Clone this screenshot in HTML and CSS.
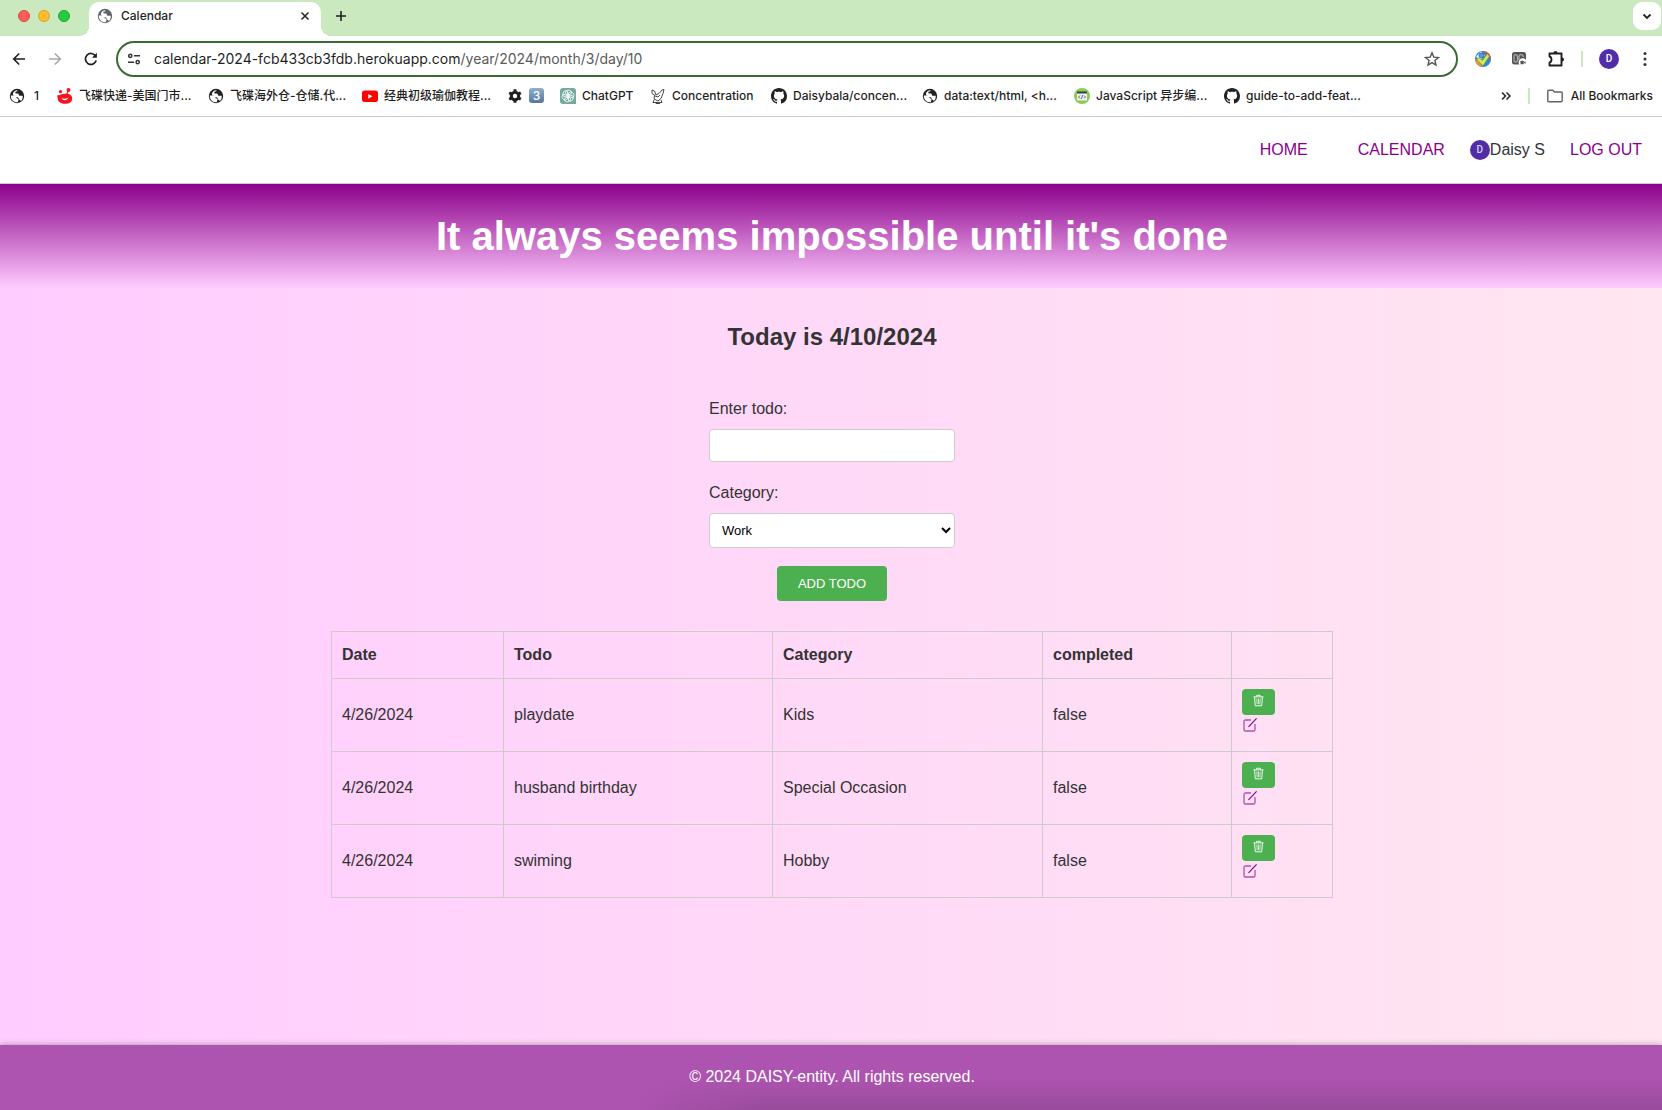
FILE: index.html
```
<!DOCTYPE html>
<html lang="en">
<head>
<meta charset="utf-8">
<title>Calendar</title>
<link rel="stylesheet" href="styles.css">
</head>
<body>
<svg class="defs" width="0" height="0" aria-hidden="true">
  <symbol id="globe" viewBox="0 0 16 16"><circle cx="8" cy="8" r="7.200" fill="currentColor"/><path d="M1.800 7.600h3.400c1.400 0 2.300.9 2.300 2.100 0 .5.500.7 1 .7.800 0 1 .6 1 1.300 0 .8-.6 1.300-.6 2.500-3.900.9-7.300-2.400-7.100-6.600zM8.600 2.200c-.2.900-.6 1.200-1.300 1.200-.6 0-1 .5-1 1.100s.5 1.100 1.100 1.100h1.200c.7 0 1.200.5 1.200 1.100 0 .8.600 1.100 1.300 1.100h2.600c.3 2.400-.6 4.300-2 5.300-.2-.8-.7-1.700-1.700-1.700-.3-1.700-1.200-2.300-2.500-2.400-.8-.1-.8-1.400-1.800-1.400-1.200 0-1.800-.7-1.800-1.800C4.200 3.700 6.400 2 8.600 2.200z" fill="#fff"/></symbol>
  <symbol id="github" viewBox="0 0 16 16"><path fill="currentColor" d="M8 0C3.580 0 0 3.580 0 8c0 3.540 2.290 6.530 5.470 7.590.4.070.55-.17.55-.38 0-.19-.01-.82-.01-1.490-2.010.37-2.530-.49-2.690-.94-.09-.23-.48-.94-.82-1.130-.28-.15-.68-.52-.01-.53.63-.01 1.080.58 1.230.82.72 1.210 1.870.87 2.330.66.07-.52.28-.87.51-1.070-1.780-.2-3.640-.89-3.640-3.950 0-.87.31-1.590.82-2.150-.08-.2-.36-1.020.08-2.120 0 0 .67-.21 2.200.82.64-.18 1.320-.27 2-.27s1.360.09 2 .27c1.530-1.040 2.200-.82 2.200-.82.44 1.100.16 1.920.08 2.120.51.56.82 1.270.82 2.150 0 3.070-1.870 3.750-3.650 3.950.29.25.54.73.54 1.480 0 1.070-.01 1.930-.01 2.200 0 .21.15.46.55.38A8.010 8.010 0 0 0 16 8c0-4.420-3.580-8-8-8z"/></symbol>
  <symbol id="trash" viewBox="0 0 12 13"><g fill="none" stroke="currentColor"><path d="M.5 2.500h11M4 2.300V.8h4v1.500M1.700 2.800l.8 9.500h7l.8-9.500"/><path stroke-width=".8" d="M4.200 4.300l.3 6.300M6 4.300v6.300M7.800 4.300l-.3 6.300"/></g></symbol>
  <symbol id="edit" viewBox="0 0 14 14"><path d="M8 2H2.600C1.500 2 1 2.600 1 3.600v7.800C1 12.500 1.600 13 2.600 13h7.800c1.100 0 1.600-.6 1.600-1.600V6" fill="none" stroke="currentColor" stroke-width="1.300" opacity=".65"/><path d="M5.500 8.800L13.600.4" stroke="currentColor" stroke-width="1.200"/></symbol>
</svg>

<div class="browser">
  <div class="tabs">
    <div class="lights"><i class="light red"></i><i class="light amber"></i><i class="light green"></i></div>
    <div class="tab">
      <svg class="icon grey"><use href="#globe"/></svg>
      <span class="tab-title">Calendar</span>
      <button class="plain" aria-label="Close tab"><svg width="10" height="10" viewBox="0 0 10 10"><path d="M1.500 1.500l7 7M8.500 1.500l-7 7" stroke="#222" stroke-width="1.500"/></svg></button>
    </div>
    <button class="plain new-tab" aria-label="New tab"><svg width="12" height="12" viewBox="0 0 12 12"><path d="M6 1v10M1 6h10" stroke="#222" stroke-width="1.600"/></svg></button>
    <button class="plain tab-search" aria-label="Search tabs"><svg width="10" height="10" viewBox="0 0 10 10"><path d="M1.500 3.500L5 7l3.500-3.500" fill="none" stroke="#222" stroke-width="1.800"/></svg></button>
  </div>

  <div class="toolbar">
    <div class="history">
      <button class="plain" aria-label="Back"><svg width="14" height="14" viewBox="0 0 14 14"><path d="M13 7H2M7.200 1.500L1.700 7l5.500 5.500" fill="none" stroke="#1f1f1f" stroke-width="1.600"/></svg></button>
      <button class="plain" aria-label="Forward"><svg width="14" height="14" viewBox="0 0 14 14"><path d="M1 7h11M6.800 1.500L12.300 7l-5.500 5.500" fill="none" stroke="#a8a8a8" stroke-width="1.600"/></svg></button>
      <button class="plain" aria-label="Reload"><svg width="14" height="14" viewBox="0 0 14 14"><path d="M12.200 8.600A5.500 5.500 0 1 1 11.600 4" fill="none" stroke="#1f1f1f" stroke-width="1.700"/><path d="M12.900.8v5H8z" fill="#1f1f1f"/></svg></button>
    </div>
    <div class="omnibox">
      <svg width="12" height="12" viewBox="0 0 12 12" fill="none" stroke="#333" stroke-width="1.500"><circle cx="2.300" cy="2.800" r="1.600"/><path d="M6 2.800h6M0 9.200h6"/><circle cx="9.700" cy="9.200" r="1.600"/></svg>
      <span class="url">calendar-2024-fcb433cb3fdb.herokuapp.com<span class="path">/year/2024/month/3/day/10</span></span>
      <button class="plain" aria-label="Bookmark this page"><svg width="16" height="16" viewBox="0 0 16 16"><path d="M8 1.800l1.800 4.300 4.700.4-3.600 3 1.100 4.600L8 11.600l-4 2.500 1.100-4.600-3.600-3 4.700-.4z" fill="none" stroke="#555" stroke-width="1.400"/></svg></button>
    </div>
    <div class="tools">
      <svg width="16" height="16" viewBox="0 0 16 16"><circle cx="8" cy="8" r="8" fill="#2f86d6"/><path d="M8 0a8 8 0 0 1 7.800 9.500L12 4z" fill="#e5512d"/><path d="M0 8.500a8 8 0 0 0 7 7.400L5 11z" fill="#f0922a"/><path d="M1 5.500L6 .8l4 3.700-5 5z" fill="#f3f7fa"/><circle cx="6.500" cy="4.500" r="2.500" fill="#5a9bd0" stroke="#2c64a0" stroke-width=".8"/><path d="M1.500 8.200L4 6.800l3.300 2.700 5-6.500 2.200 2L8 14.800z" fill="#d6ec55" stroke="#7d9c2c" stroke-width=".7"/></svg>
      <svg width="16" height="16" viewBox="0 0 16 16"><rect x="1" y="1" width="14" height="12.500" rx="2.500" fill="#555"/><path d="M3 5.500C3 3 6 3 6.500 5.500v4C6 11.500 3 11.500 3 9.500zM8 9V5.500C8.500 3 12 3 12.500 6" fill="none" stroke="#aaa" stroke-width="1.300"/><circle cx="11.800" cy="11.500" r="4.200" fill="#fff"/><rect x="9.500" y="9.700" width="3.200" height="3.600" rx=".6" fill="#555"/><path d="M12.500 11.500l2-1.400v2.800z" fill="#555"/></svg>
      <svg width="18" height="18" viewBox="0 0 18 18"><path d="M2.500 3.500h12v12h-12v-3c2.600-.5 2.600-5.500 0-6z" fill="none" stroke="#1f1f1f" stroke-width="1.900" stroke-linejoin="round"/><path d="M6.500 3a2 2 0 0 1 4 0zM15 7.500a2 2 0 0 1 0 4z" fill="#1f1f1f"/></svg>
      <i class="rule"></i>
      <span class="avatar">D</span>
      <button class="plain menu" aria-label="Menu"><svg width="4" height="16" viewBox="0 0 4 16" fill="#333"><circle cx="2" cy="2.500" r="1.500"/><circle cx="2" cy="8" r="1.500"/><circle cx="2" cy="13.500" r="1.500"/></svg></button>
    </div>
  </div>

  <div class="bookmarks">
    <div class="bookmark-list">
      <a class="bookmark" href="#"><svg class="icon"><use href="#globe"/></svg><span class="wide">1</span></a>
      <a class="bookmark" href="#"><svg class="icon" viewBox="0 0 16 16"><path d="M.5 7C2 8.300 4.500 5.300 8.500 5.800c4.500-.3 6.700 1.700 6.700 4.700 0 3.500-3 5.300-7 5.300S.8 14 .8 10.800C.5 9 0 8 .5 7z" fill="#f5141e"/><circle cx="3.500" cy="3.700" r="1.600" fill="#f5141e"/><circle cx="11.500" cy="2" r="1.900" fill="#f5141e"/><path d="M11.500 2L9.500 7" stroke="#f5141e" stroke-width="1.200"/><path d="M4.500 10.300c1.500 2.700 5.500 2.500 7-.8-2 1.300-4.700 1.600-7 .8z" fill="#fff"/></svg><span>飞碟快递-美国门市...</span></a>
      <a class="bookmark" href="#"><svg class="icon"><use href="#globe"/></svg><span>飞碟海外仓-仓储.代...</span></a>
      <a class="bookmark" href="#"><svg class="icon" viewBox="0 0 16 16"><rect y="2.500" width="16" height="11.500" rx="2.800" fill="#f00"/><path d="M6.300 5.900l4.200 2.400-4.200 2.400z" fill="#fff"/></svg><span>经典初级瑜伽教程...</span></a>
      <a class="bookmark" href="#" aria-label="Tools 3"><svg class="icon" viewBox="0 0 16 16"><circle cx="8" cy="8" r="3.700" fill="none" stroke="#202124" stroke-width="3"/><path d="M8 1.300v2.500M8 12.200v2.500M2.200 4.700l2.200 1.200M11.600 10.100l2.200 1.200M2.200 11.300l2.200-1.200M11.600 5.900l2.200-1.200" stroke="#202124" stroke-width="3"/></svg><span class="keycap">3</span></a>
      <a class="bookmark" href="#"><svg class="icon" viewBox="0 0 16 16"><path d="M3 0h10a3 3 0 0 1 3 3v13H3a3 3 0 0 1-3-3V3a3 3 0 0 1 3-3z" fill="#74aa9c"/><g fill="none" stroke="#fff" stroke-width=".8"><path id="petal" d="M8 2.300c2-.7 3.900.8 3.600 3L8 7.400 5.600 6V4.200c0-1 .9-1.700 2.400-1.900z"/><use href="#petal" transform="rotate(60 8 8)"/><use href="#petal" transform="rotate(120 8 8)"/><use href="#petal" transform="rotate(180 8 8)"/><use href="#petal" transform="rotate(240 8 8)"/><use href="#petal" transform="rotate(300 8 8)"/></g></svg><span>ChatGPT</span></a>
      <a class="bookmark" href="#"><svg class="icon" viewBox="0 0 16 16" fill="none" stroke="#333" stroke-width=".9"><path d="M2 2l2.500 1 1.500 4 3-1.500L12 2l2-.5-1 4-2 5-3 2.500-4-2 .5-4L2 5.500zM4 12l-1 2.500h9L11 12M5 8l3 1 2-2M6 14v1.500h4"/></svg><span>Concentration</span></a>
      <a class="bookmark" href="#"><svg class="icon"><use href="#github"/></svg><span>Daisybala/concen...</span></a>
      <a class="bookmark" href="#"><svg class="icon"><use href="#globe"/></svg><span>data:text/html, &lt;h...</span></a>
      <a class="bookmark" href="#"><svg class="icon" viewBox="0 0 16 16"><circle cx="8" cy="8" r="8" fill="#8bcb4f"/><path d="M3 4h10v8.500H3z" fill="#f2f2f2"/><path d="M3 3.500h10v2H3z" fill="#2e4057"/><path d="M6 7.500L4.500 9 6 10.500M10 7.500L11.500 9 10 10.500M8.600 7.200l-1.200 3.600" fill="none" stroke="#2e4057" stroke-width=".8"/></svg><span>JavaScript 异步编...</span></a>
      <a class="bookmark" href="#"><svg class="icon"><use href="#github"/></svg><span>guide-to-add-feat...</span></a>
    </div>
    <button class="plain" aria-label="More bookmarks"><svg width="10" height="10" viewBox="0 0 10 10"><path d="M1 1.500L4.500 5 1 8.500M5.500 1.500L9 5 5.500 8.500" fill="none" stroke="#222" stroke-width="1.500"/></svg></button>
    <i class="rule"></i>
    <a class="bookmark all" href="#"><svg class="icon" viewBox="0 0 16 16"><path d="M.8 3.300c0-.6.400-1 1-1h4l1.700 1.700h6.700c.6 0 1 .4 1 1v7.700c0 .6-.4 1-1 1H1.800c-.6 0-1-.4-1-1z" fill="none" stroke="#5f6368" stroke-width="1.400"/></svg><span>All Bookmarks</span></a>
  </div>
</div>

<nav class="nav">
  <a class="home" href="#">HOME</a>
  <a href="#">CALENDAR</a>
  <span class="user"><span class="avatar small">D</span>Daisy S</span>
  <a href="#">LOG OUT</a>
</nav>

<header class="hero"><h1>It always seems impossible until it's done</h1></header>

<main>
  <h2>Today is 4/10/2024</h2>
  <form class="todo-form">
    <label for="todo">Enter todo:</label>
    <input id="todo" type="text">
    <label for="category">Category:</label>
    <select id="category"><option>Work</option><option>Kids</option><option>Hobby</option><option>Special Occasion</option></select>
    <button class="add" type="button">ADD TODO</button>
  </form>

  <table>
    <colgroup><col class="c-date"><col class="c-todo"><col class="c-category"><col class="c-done"><col class="c-actions"></colgroup>
    <thead><tr><th>Date</th><th>Todo</th><th>Category</th><th>completed</th><th></th></tr></thead>
    <tbody>
      <tr><td>4/26/2024</td><td>playdate</td><td>Kids</td><td>false</td><td><div class="actions"><button class="delete" aria-label="Delete"><svg width="11" height="13"><use href="#trash"/></svg></button><a class="edit" href="#" aria-label="Edit"><svg width="14" height="14"><use href="#edit"/></svg></a></div></td></tr>
      <tr><td>4/26/2024</td><td>husband birthday</td><td>Special Occasion</td><td>false</td><td><div class="actions"><button class="delete" aria-label="Delete"><svg width="11" height="13"><use href="#trash"/></svg></button><a class="edit" href="#" aria-label="Edit"><svg width="14" height="14"><use href="#edit"/></svg></a></div></td></tr>
      <tr><td>4/26/2024</td><td>swiming</td><td>Hobby</td><td>false</td><td><div class="actions"><button class="delete" aria-label="Delete"><svg width="11" height="13"><use href="#trash"/></svg></button><a class="edit" href="#" aria-label="Edit"><svg width="14" height="14"><use href="#edit"/></svg></a></div></td></tr>
    </tbody>
  </table>
</main>

<footer>© 2024 DAISY-entity. All rights reserved.</footer>
</body>
</html>
```
FILE: styles.css
```
* { box-sizing: border-box; }

body {
  margin: 0;
  min-height: 100vh;
  display: flex;
  flex-direction: column;
  font: 16px/26px "Liberation Sans", Arial, sans-serif;
  color: #333;
  background: linear-gradient(to right, #ffccff, #ffe6f0);
}

a { color: #8b008b; text-decoration: none; }
svg { display: block; flex: none; }
.defs { position: absolute; }

/* Browser window */
.browser {
  font: 500 12px/16px Inter, "Noto Sans CJK SC", sans-serif;
  color: #1f1f1f;
  background: #fff;
  border-bottom: 1px solid #c8c8c8;
}
.plain {
  display: flex;
  padding: 0;
  border: 0;
  background: none;
}
.icon { width: 16px; height: 16px; color: #202124; }
.grey { color: #5f6368; }
.rule { width: 2px; height: 16px; background: #c9e8bf; }

.tabs {
  display: flex;
  height: 36px;
  padding: 2px 1px 0 18px;
  background: #cae9bf;
}
.lights { display: flex; gap: 8px; width: 71px; padding-top: 8px; }
.light { width: 12px; height: 12px; border-radius: 50%; }
.red { background: #ff5f57; border: 1px solid #e0483e; }
.amber { background: #febc2e; border: 1px solid #e0a028; }
.green { background: #28c840; border: 1px solid #1cab30; }
.tab {
  position: relative;
  display: flex;
  align-items: center;
  width: 232px;
  padding: 0 11px 6px 8px;
  border-radius: 10px 10px 0 0;
  background: #fff;
}
.tab::before,
.tab::after {
  content: "";
  position: absolute;
  bottom: 0;
  width: 10px;
  height: 10px;
}
.tab::before { left: -10px; background: radial-gradient(circle at 0 0, transparent 10px, #fff 10px); }
.tab::after { right: -10px; background: radial-gradient(circle at 100% 0, transparent 10px, #fff 10px); }
.tab-title { flex: 1; margin-left: 8px; }
.new-tab { margin: 8px auto 0 14px; }
.tab-search {
  align-items: center;
  justify-content: center;
  width: 28px;
  height: 28px;
  border-radius: 9px;
  background: #fff;
}

.toolbar {
  display: flex;
  align-items: center;
  padding: 5px 15px 0 12px;
}
.history { display: flex; gap: 22px; width: 104px; }
.omnibox {
  flex: 1;
  display: flex;
  align-items: center;
  height: 36px;
  padding: 0 16px 0 10px;
  border: 2px solid #3a6b33;
  border-radius: 18px;
}
.url { flex: 1; margin-left: 14px; font-size: 14px; font-weight: 400; }
.path { color: #5a5a5a; }
.tools { display: flex; align-items: center; gap: 20px; margin-left: 17px; }
.tools .rule { margin: 0 -4px; }
.menu { margin-left: 4px; }
.avatar {
  display: flex;
  align-items: center;
  justify-content: center;
  width: 20px;
  height: 20px;
  border-radius: 50%;
  background: #512da8;
  color: #fff;
  font: 500 10px/20px Roboto, sans-serif;
}

.bookmarks {
  display: flex;
  align-items: center;
  height: 39px;
  padding: 0 9px 2px;
  gap: 17px;
}
.bookmark-list {
  flex: 1;
  display: grid;
  grid-template-columns: 48px 151px 154px 145px 53px 90px 121px 151px 152px 150px 140px;
}
.bookmark {
  display: flex;
  align-items: center;
  gap: 6px;
  color: #1f1f1f;
  white-space: nowrap;
}
.all { gap: 8px; }
.wide { padding-left: 3px; }
.keycap {
  width: 15px;
  height: 15px;
  border-radius: 3px;
  background: linear-gradient(#8db0d0, #54789e);
  color: #fff;
  line-height: 15px;
  text-align: center;
}

/* Site */
.nav {
  display: flex;
  align-items: center;
  justify-content: flex-end;
  gap: 25px;
  height: 67px;
  padding: 0 20px;
  background: #fff;
  border-bottom: 1px solid #ccc;
}
.home { margin-right: 25px; }
.user { display: flex; align-items: center; }
.small { color: #d6cdf0; }

.hero {
  padding: 26px 20px 26px 22px;
  background: linear-gradient(#8b008b, #ffccff);
  text-align: center;
}
h1 { margin: 0; font-size: 40px; line-height: 52px; color: #fff; }

main {
  flex: 1;
  display: flex;
  flex-direction: column;
  align-items: center;
  padding: 30px 20px 60px 22px;
}
h2 { margin: 0 0 40px; font-size: 24px; line-height: 38px; }

.todo-form {
  display: flex;
  flex-direction: column;
  width: 246px;
  margin-bottom: 30px;
}
.todo-form label { margin-bottom: 7px; }
.todo-form input,
.todo-form select {
  border: 1px solid #ccc;
  border-radius: 4px;
  background: #fff;
  color: #000;
  font: 13px/16px "Liberation Sans", Arial, sans-serif;
}
.todo-form input { height: 33px; margin-bottom: 18px; padding: 8px; }
.todo-form select { height: 35px; margin-bottom: 18px; padding: 8px; }
.add {
  align-self: center;
  width: 110px;
  height: 35px;
  padding: 0;
  border: 0;
  border-radius: 4px;
  background: #4caf50;
  color: #fff;
  font: 13px/16px "Liberation Sans", Arial, sans-serif;
}

table {
  width: 100%;
  max-width: 1002px;
  table-layout: fixed;
  border-collapse: collapse;
}
th, td { padding: 10px; border: 1px solid #ccc; text-align: left; }
.c-date { width: 172px; }
.c-todo { width: 269px; }
.c-category { width: 270px; }
.c-done { width: 189px; }
.actions {
  display: flex;
  flex-direction: column;
  align-items: flex-start;
  gap: 3px;
  height: 52px;
}
.delete {
  display: flex;
  justify-content: center;
  width: 33px;
  height: 26px;
  padding: 5px 0;
  border: 0;
  border-radius: 4px;
  background: #4caf50;
  color: #fff;
}
.edit { padding-left: 1px; }

footer {
  padding: 19px 20px 20px 22px;
  background:
    linear-gradient(to right, #ad54b0 38%, transparent 46%),
    linear-gradient(#ad54b0 50%, #984a9b);
  box-shadow: 0 0 6px rgba(0, 0, 0, .35);
  color: #fff;
  text-align: center;
}
```
